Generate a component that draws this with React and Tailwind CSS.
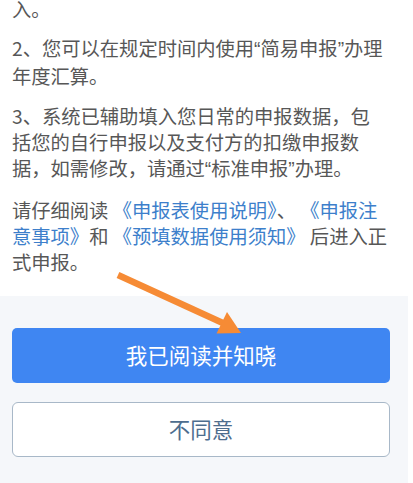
import React from "react";

const FONT = "font-['Noto_Sans_CJK_SC','Noto_Sans',sans-serif]";

function Link({ children }) {
  return <span className="text-[#3d7fcb]">{children}</span>;
}

// narrow latin-style quote marks, as in the reference
function Q({ children }) {
  return <span className="font-['Liberation_Sans',sans-serif]">{children}</span>;
}

function Arrow() {
  return (
    <svg
      className="absolute left-0 top-0 pointer-events-none"
      width="413"
      height="483"
      viewBox="0 0 413 483"
      aria-hidden="true"
    >
      <line x1="118" y1="275" x2="225" y2="324" stroke="#f68b35" strokeWidth="6.5" />
      <polygon points="241,333 216.5,333.5 227,312" fill="#f68b35" />
    </svg>
  );
}

export default function App() {
  return (
    <div className={`relative w-[413px] h-[483px] overflow-hidden bg-white ${FONT}`}>
      {/* notice text */}
      <div className="pl-[12px] pr-[25px] text-[19.3px] leading-[26px] text-[#575757]">
        <p className="-mt-[4px]">入。</p>
        <p className="mt-[13px]">
          2、您可以在规定时间内使用<Q>“</Q>简易申报<Q>”</Q>办理年度汇算。
        </p>
        <p className="mt-[14px]">
          3、系统已辅助填入您日常的申报数据，包括您的自行申报以及支付方的扣缴申报数据，如需修改，请通过<Q>“</Q>标准申报<Q>”</Q>办理。
        </p>
        <p className="mt-[14px]">
          请仔细阅读 <Link>《申报表使用说明》</Link>、 <Link>《申报注意事项》</Link>和{" "}
          <Link>《预填数据使用须知》</Link> 后进入正式申报。
        </p>
      </div>

      {/* actions */}
      <div className="absolute left-0 right-[5px] top-[296px] bottom-0 bg-[#f5f7fa] pl-[12px] pr-[18px] pt-[32px]">
        <button className="w-full h-[55px] rounded-[5px] bg-[#3f86f2] text-white text-[21.5px] flex items-center justify-center">
          我已阅读并知晓
        </button>
        <button className="mt-[19px] w-full h-[55px] rounded-[6px] bg-white border border-[#a8b8c8] text-[#4d6d8e] text-[21.5px] flex items-center justify-center">
          不同意
        </button>
      </div>

      <Arrow />
    </div>
  );
}
